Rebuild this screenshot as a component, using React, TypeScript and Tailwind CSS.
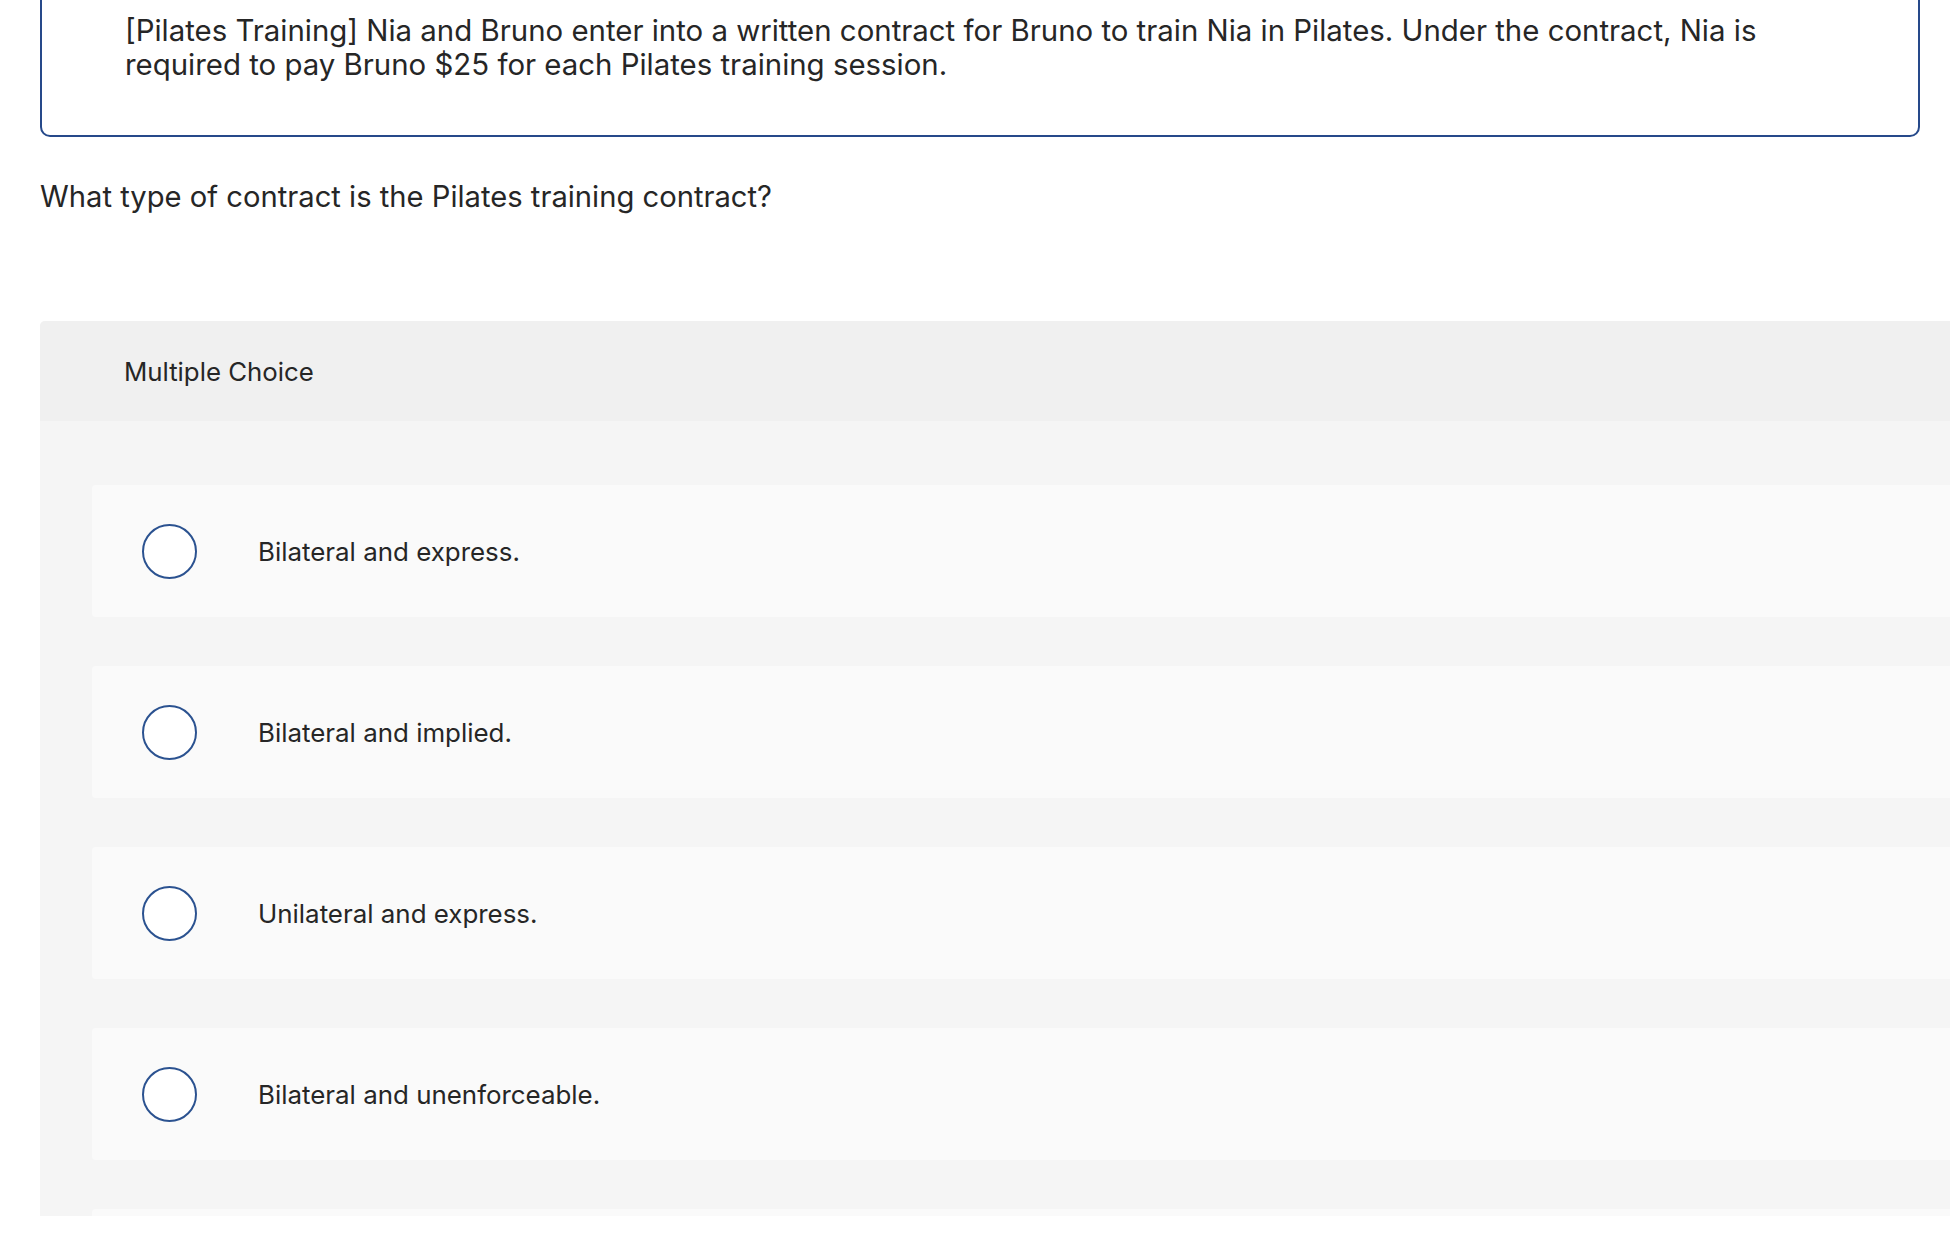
import React from "react";

const options = [
  "Bilateral and express.",
  "Bilateral and implied.",
  "Unilateral and express.",
  "Bilateral and unenforceable.",
];

function Option({ label }: { label?: string }) {
  return (
    <div className="flex h-[132px] shrink-0 items-center rounded-[4px] bg-[#fafafa] pl-[50px]">
      {label !== undefined && (
        <>
          <span className="block h-[55px] w-[55px] shrink-0 rounded-full border-2 border-[#2b5290] bg-white" />
          <span className="ml-[61px] text-[25.9px] leading-[33px] text-[#262626]">{label}</span>
        </>
      )}
    </div>
  );
}

export default function App() {
  return (
    <div className="h-[1254px] w-[1950px] overflow-hidden bg-white font-['Inter','Liberation_Sans',sans-serif] text-[#262626]">
      <div className="pl-[40px] pr-[30px]">
        <div className="mt-[-30px] rounded-[10px] border-2 border-[#26498a] pb-[53px] pl-[83px] pr-[82px] pt-[42px]">
          <p className="text-[29.4px] leading-[34px]">
            [Pilates Training] Nia and Bruno enter into a written contract for Bruno to train Nia in Pilates. Under the
            contract, Nia is required to pay Bruno $25 for each Pilates training session.
          </p>
        </div>
      </div>

      <p className="ml-[40px] mt-[43px] text-[29.2px] leading-[33px]">
        What type of contract is the Pilates training contract?
      </p>

      <div className="ml-[40px] mr-[-40px] mt-[108px] h-[895px] overflow-hidden rounded-t-[5px] bg-[#f5f5f5]">
        <div className="flex h-[100px] items-center bg-[#f0f0f0] pl-[84px]">
          <span className="text-[25.8px] leading-[33px]">Multiple Choice</span>
        </div>
        <div className="flex flex-col gap-[49px] pl-[52px] pt-[64px]">
          {options.map((o) => (
            <Option key={o} label={o} />
          ))}
          <Option />
        </div>
      </div>
    </div>
  );
}
